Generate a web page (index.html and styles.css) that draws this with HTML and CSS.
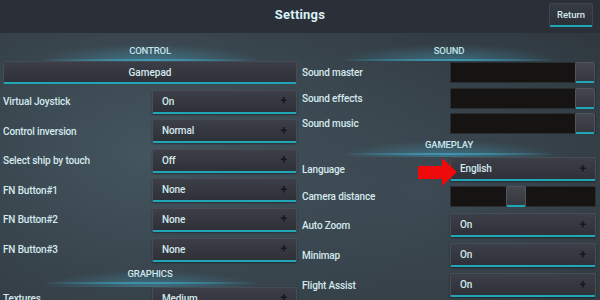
FILE: index.html
```html
<!DOCTYPE html>
<html lang="en">
<head>
  <meta charset="UTF-8" />
  <meta name="viewport" content="width=device-width, initial-scale=1.0"/>
  <title>Settings</title>
  <link rel="stylesheet" href="styles.css">
</head>
<body>
  <header class="topbar">
    <div></div>
    <h1 class="title">Settings</h1>
    <button class="return-btn">Return</button>
  </header>

  <main class="panel">
    <section class="col col-left">
      <div class="section-title">CONTROL</div>
      <button class="wide-btn">Gamepad</button>
      <div class="row"><span class="label">Virtual Joystick</span><div class="select">On<span class="plus">+</span></div></div>
      <div class="row"><span class="label">Control inversion</span><div class="select">Normal<span class="plus">+</span></div></div>
      <div class="row"><span class="label">Select ship by touch</span><div class="select">Off<span class="plus">+</span></div></div>
      <div class="row"><span class="label">FN Button#1</span><div class="select">None<span class="plus">+</span></div></div>
      <div class="row"><span class="label">FN Button#2</span><div class="select">None<span class="plus">+</span></div></div>
      <div class="row"><span class="label">FN Button#3</span><div class="select">None<span class="plus">+</span></div></div>
      <div class="section-title low">GRAPHICS</div>
      <div class="row first"><span class="label">Textures</span><div class="select">Medium<span class="plus">+</span></div></div>
    </section>

    <section class="col col-right">
      <div class="section-title">SOUND</div>
      <div class="row slim first"><span class="label">Sound master</span><div class="slider"><span class="knob" style="left: 100%"></span></div></div>
      <div class="row slim"><span class="label">Sound effects</span><div class="slider"><span class="knob" style="left: 100%"></span></div></div>
      <div class="row slim"><span class="label">Sound music</span><div class="slider"><span class="knob" style="left: 100%"></span></div></div>
      <div class="section-title low">GAMEPLAY</div>
      <div class="row first"><span class="label">Language</span><div class="select">English<span class="plus">+</span></div></div>
      <div class="row slim"><span class="label">Camera distance</span><div class="slider"><span class="knob" style="left: 52%"></span></div></div>
      <div class="row"><span class="label">Auto Zoom</span><div class="select">On<span class="plus">+</span></div></div>
      <div class="row"><span class="label">Minimap</span><div class="select">On<span class="plus">+</span></div></div>
      <div class="row"><span class="label">Flight Assist</span><div class="select">On<span class="plus">+</span></div></div>
    </section>

    <svg class="pointer" width="40" height="30" viewBox="0 0 40 30">
      <polygon points="0,8 24,8 24,0 39,14 24,28 24,21 0,21" fill="#ee0a0a"/>
    </svg>
  </main>
</body>
</html>
```

FILE: styles.css
```css
:root {
  --text: #d5e9ee;
  --teal: #1fa7b8;
  --header-color: #2b2f37;
}

* {
  box-sizing: border-box;
}

body {
  margin: 0;
  width: 600px;
  height: 300px;
  overflow: hidden;
  font-family: Roboto, 'Noto Sans', sans-serif;
  font-size: 10px;
  font-weight: 500;
  letter-spacing: -0.15px;
  color: var(--text);
  background: #33404a;
}

.topbar {
  height: 33px;
  background-color: var(--header-color);
  display: grid;
  grid-template-columns: 1fr auto 1fr;
  align-items: start;
}

.title {
  margin: 0;
  padding-top: 7px;
  font-size: 13px;
  font-weight: bold;
  color: #d9f1f6;
  letter-spacing: 0.2px;
}

.return-btn {
  justify-self: end;
  margin: 3px 7px 0 0;
  width: 44px;
  height: 24px;
  padding: 0;
  font-family: inherit;
  font-size: 9.5px;
  font-weight: 500;
  color: var(--text);
  background: linear-gradient(#363a42, #2c3037);
  border: 1px solid #40454d;
  border-bottom: 2px solid var(--teal);
  border-radius: 2px;
}

.panel {
  position: relative;
  height: 267px;
  display: grid;
  grid-template-columns: 300px 300px;
  background:
    radial-gradient(ellipse 320px 220px at 150px 120px, #44555f 0%, rgba(68, 85, 95, 0) 100%),
    radial-gradient(ellipse 260px 200px at 430px 160px, #3c4952 0%, rgba(60, 73, 82, 0) 100%),
    #303940;
}

.col-left {
  padding: 0 3px;
}

.col-right {
  padding: 0 4px 0 2px;
}

.section-title {
  position: relative;
  height: 28px;
  display: flex;
  flex-direction: column;
  justify-content: flex-end;
  align-items: center;
  font-size: 9.5px;
  line-height: 12px;
  color: #d6ecf0;
}

.section-title::before {
  content: '';
  position: absolute;
  left: 10%;
  right: 10%;
  bottom: 0;
  height: 18px;
  background: radial-gradient(ellipse at 50% 100%, rgba(70, 180, 210, 0.4) 0%, rgba(70, 175, 205, 0) 65%);
}

.section-title::after {
  content: '';
  display: block;
  width: 85%;
  height: 2px;
  margin-top: 2px;
  background: radial-gradient(ellipse at center, #a4eaf8 0%, rgba(60, 175, 210, 0.75) 25%, rgba(60, 175, 210, 0) 70%);
}

.col-left .section-title.low {
  height: 25px;
  padding-bottom: 3px;
}

.col-right .section-title.low {
  height: 23px;
  padding-bottom: 2px;
}

.wide-btn {
  display: block;
  width: 100%;
  height: 23px;
  padding: 0;
  font-family: inherit;
  font-size: 10px;
  font-weight: 500;
  color: var(--text);
  background: linear-gradient(#3b3e46, #2e3138);
  border: 1px solid #464a52;
  border-bottom: 2px solid var(--teal);
  border-radius: 2px;
}

.row {
  display: grid;
  grid-template-columns: 1fr 145px;
  align-items: center;
  height: 24px;
  margin-top: 5.6px;
}

.col-right .row {
  grid-template-columns: 1fr 146px;
  margin-top: 6px;
}

.col-left .row.first {
  margin-top: 0;
}

.col-right .row.slim {
  height: 21px;
  margin-top: 4.5px;
}

.col-right .row.first {
  margin-top: 1px;
}

.col-right .row.first:not(.slim) {
  margin-top: 0;
}

.col-right .section-title.low + .row + .row.slim {
  margin-top: 5px;
}

.label {
  white-space: nowrap;
}

.select {
  height: 100%;
  display: flex;
  justify-content: space-between;
  align-items: center;
  padding: 0 9px;
  background: linear-gradient(#3c3f47, #2e3138);
  border: 1px solid #484c54;
  border-bottom: 2px solid var(--teal);
  border-radius: 2px;
  box-shadow: 0 1px 2px rgba(0, 0, 0, 0.4);
}

.plus {
  font-size: 12px;
  font-weight: bold;
  color: #15171b;
}

.slider {
  position: relative;
  height: 100%;
  background: #161412;
  border: 1px solid #2a2e33;
  border-radius: 1px;
}

.knob {
  position: absolute;
  top: -1px;
  bottom: -1px;
  width: 20px;
  transform: translateX(-100%);
  background: linear-gradient(#44474e, #34373e);
  border: 1px solid #50545b;
  border-bottom: 2px solid var(--teal);
  border-radius: 2px;
}

.pointer {
  position: absolute;
  left: 418px;
  top: 125px;
}
```
